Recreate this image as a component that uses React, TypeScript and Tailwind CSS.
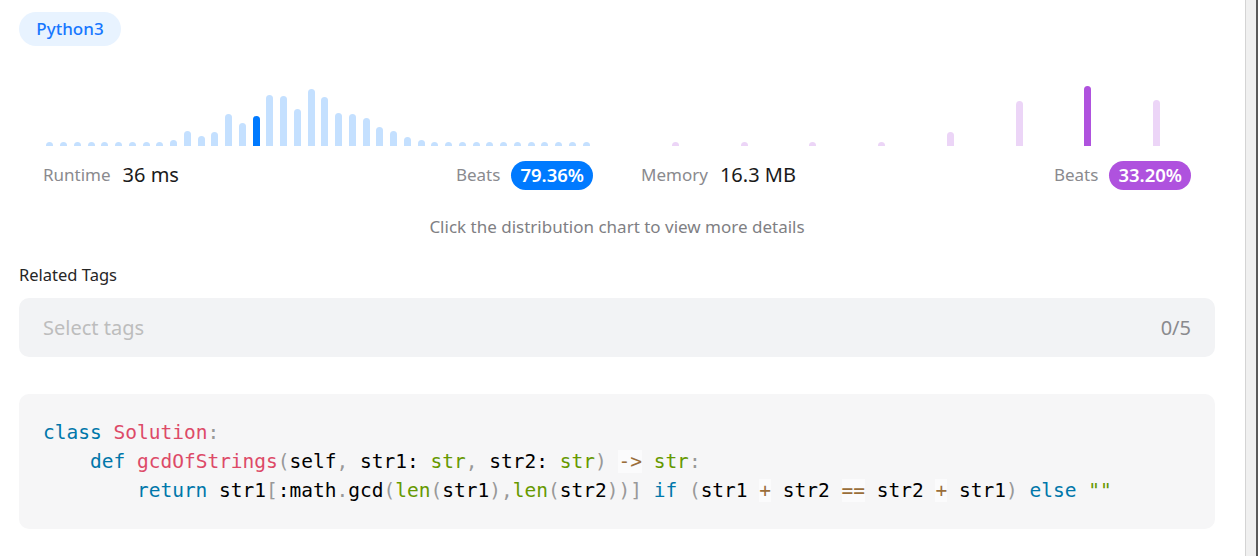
import type { ReactNode } from 'react'

const runtimeBars = [
	4.5, 4.5, 4.5, 4.5, 4.5, 4.5, 4.5, 4.5, 4.5, 6, 15, 10, 14, 32, 23, 30, 51, 50, 37, 57,
	49, 33, 32, 28, 19, 15, 9, 6, 4.5, 4.5, 4.5, 4.5, 4.5, 4.5, 4.5, 4.5, 4.5, 4.5, 4.5, 4.5,
]
const runtimeActive = 15

const memoryBars = Array.from({ length: 40 }, (_, i) => {
	const map: Record<number, number> = { 2: 4.5, 7: 4.5, 12: 4.5, 17: 4.5, 22: 14, 27: 45, 32: 60, 37: 46 }
	return map[i] ?? 0
})
const memoryActive = 32

function Chart({ bars, active, light, dark }: { bars: number[]; active: number; light: string; dark: string }) {
	return (
		<div className="flex h-[80px] items-end">
			{bars.map((h, i) => (
				<div key={i} className="flex flex-1 justify-center">
					{h > 0 && (
						<div
							className={`w-[7px] rounded-t-[4px] ${i === active ? dark : light}`}
							style={{ height: `${h}px` }}
						/>
					)}
				</div>
			))}
		</div>
	)
}

function Stat({ label, value, pill, pillClass }: { label: string; value: string; pill: string; pillClass: string }) {
	return (
		<div className="mt-[14px] flex h-[30px] items-center">
			<span className="text-[17px] text-[#8a8a8e]">{label}</span>
			<span className="ml-[12px] text-[20px] text-[#1a1a1a]">{value}</span>
			<span className="ml-auto text-[17px] text-[#8a8a8e]">Beats</span>
			<span className={`ml-[11px] flex h-[29px] items-center rounded-full px-[9px] text-[18.5px] font-semibold text-white ${pillClass}`}>
				{pill}
			</span>
		</div>
	)
}

const kw = 'text-[#0077aa]'
const fn = 'text-[#dd4a68]'
const bi = 'text-[#669900]'
const pu = 'text-[#999999]'
const op = 'bg-[rgba(255,255,255,0.6)] text-[#9a6e3a]'

function T({ c, children }: { c?: string; children: ReactNode }) {
	return <span className={c}>{children}</span>
}

export default function App() {
	return (
		<div className="flex h-screen bg-white font-['Noto_Sans',sans-serif]">
			<main className="flex-1 pl-[19px] pr-[30px] pt-[12px]">
				<div className="flex h-[34px] w-[102px] items-center justify-center rounded-full bg-[#e8f3ff] text-[17px] font-medium text-[#1677ff]">
					Python3
				</div>

				<div className="mt-[20px] grid grid-cols-2 gap-[48px] px-[24px]">
					<div>
						<Chart bars={runtimeBars} active={runtimeActive} light="bg-[#c4e0ff]" dark="bg-[#007aff]" />
						<Stat label="Runtime" value="36 ms" pill="79.36%" pillClass="bg-[#007aff]" />
					</div>
					<div>
						<Chart bars={memoryBars} active={memoryActive} light="bg-[#ecd5f7]" dark="bg-[#af52de]" />
						<Stat label="Memory" value="16.3 MB" pill="33.20%" pillClass="bg-[#af52de]" />
					</div>
				</div>

				<p className="mt-[27px] text-center text-[17px] leading-[20px] text-[#7f7f84]">
					Click the distribution chart to view more details
				</p>

				<p className="mt-[28px] text-[16.5px] leading-[20px] text-[#262626]">Related Tags</p>

				<div className="mt-[13px] flex h-[59px] items-center justify-between rounded-[10px] bg-[#f2f3f5] px-[24px] text-[20px]">
					<span className="text-[#bdbdbd]">Select tags</span>
					<span className="text-[#8a8a8e]">0/5</span>
				</div>

				<div className="mt-[37px] whitespace-pre rounded-[10px] bg-[#f6f6f7] px-[24px] pb-[24px] pt-[24px] font-['DejaVu_Sans_Mono',monospace] text-[19.5px] leading-[29px] text-black">
					<div>
						<T c={kw}>class</T> <T c={fn}>Solution</T><T c={pu}>:</T>
					</div>
					<div>
						{'    '}<T c={kw}>def</T> <T c={fn}>gcdOfStrings</T><T c={pu}>(</T>self<T c={pu}>,</T> str1: <T c={bi}>str</T><T c={pu}>,</T> str2: <T c={bi}>str</T><T c={pu}>)</T> <T c={op}>-&gt;</T> <T c={bi}>str</T><T c={pu}>:</T>
					</div>
					<div>
						{'        '}<T c={kw}>return</T> str1<T c={pu}>[</T>:math<T c={pu}>.</T>gcd<T c={pu}>(</T><T c={bi}>len</T><T c={pu}>(</T>str1<T c={pu}>),</T><T c={bi}>len</T><T c={pu}>(</T>str2<T c={pu}>))]</T> <T c={kw}>if</T> <T c={pu}>(</T>str1 <T c={op}>+</T> str2 <T c={op}>==</T> str2 <T c={op}>+</T> str1<T c={pu}>)</T> <T c={kw}>else</T> <T c={bi}>""</T>
					</div>
				</div>
			</main>
			<div className="flex h-full">
				<div className="w-[11px] border-l border-[#d4d4d4] bg-[#f0f0f0]" />
				<div className="w-[2px] bg-[#5a5a5a]" />
			</div>
		</div>
	)
}
